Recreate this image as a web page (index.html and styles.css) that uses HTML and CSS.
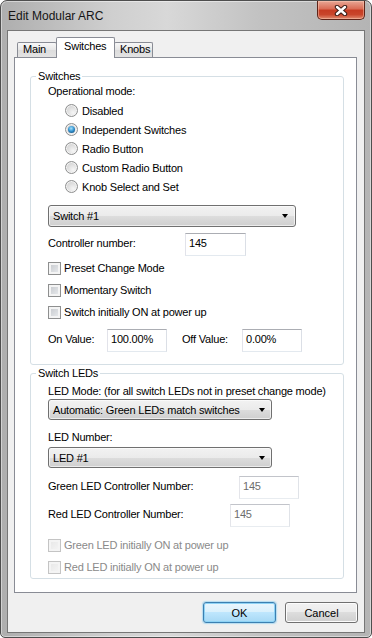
FILE: index.html
```html
<!DOCTYPE html>
<html lang="en">
  <head>
    <meta charset="UTF-8" />
    <title>Edit Modular ARC</title>
    <link rel="stylesheet" href="styles.css">
  </head>
  <body>
    <div class="window">
      <div class="titlebar">
        <span class="title">Edit Modular ARC</span>
        <button class="close-btn">
          <svg width="14" height="11" viewBox="0 0 14 11">
            <path d="M3 2 L11 9 M11 2 L3 9" stroke="#3a1c16" stroke-width="4.4" stroke-linecap="round" fill="none"/>
            <path d="M3 2 L11 9 M11 2 L3 9" stroke="#ffffff" stroke-width="2.4" stroke-linecap="round" fill="none"/>
          </svg>
        </button>
      </div>
      <div class="client">
        <div class="tabs">
          <div class="tab tab-main">Main</div>
          <div class="tab tab-switches active">Switches</div>
          <div class="tab tab-knobs">Knobs</div>
        </div>
        <div class="tab-page">
          <fieldset class="group">
            <legend>Switches</legend>
            <div class="group-body">
              <div class="caption">Operational mode:</div>
              <div class="radio-list">
                <label class="radio-row"><span class="radio"></span>Disabled</label>
                <label class="radio-row"><span class="radio checked"></span>Independent Switches</label>
                <label class="radio-row"><span class="radio"></span>Radio Button</label>
                <label class="radio-row"><span class="radio"></span>Custom Radio Button</label>
                <label class="radio-row"><span class="radio"></span>Knob Select and Set</label>
              </div>
              <div class="combo combo-switch">
                <span>Switch #1</span>
                <span class="arrow"></span>
              </div>
              <div class="field-row controller-row">
                <span class="field-label" style="width: 137px">Controller number:</span>
                <span class="textbox">145</span>
              </div>
              <div class="checks">
                <label class="check-row"><span class="check"></span>Preset Change Mode</label>
                <label class="check-row"><span class="check"></span>Momentary Switch</label>
                <label class="check-row"><span class="check"></span>Switch initially ON at power up</label>
              </div>
              <div class="field-row value-row">
                <span class="field-label" style="width: 59px">On Value:</span>
                <span class="textbox">100.00%</span>
                <span class="field-label off-label" style="width: 60px">Off Value:</span>
                <span class="textbox">0.00%</span>
              </div>
            </div>
          </fieldset>

          <fieldset class="group group-leds">
            <legend>Switch LEDs</legend>
            <div class="group-body">
              <div class="caption led-mode">LED Mode: (for all switch LEDs not in preset change mode)</div>
              <div class="combo combo-led combo-mode">
                <span>Automatic: Green LEDs match switches</span>
                <span class="arrow"></span>
              </div>
              <div class="caption led-number">LED Number:</div>
              <div class="combo combo-led combo-number">
                <span>LED #1</span>
                <span class="arrow"></span>
              </div>
              <div class="field-row green-row">
                <span class="field-label" style="width: 191px">Green LED Controller Number:</span>
                <span class="textbox disabled">145</span>
              </div>
              <div class="field-row red-row">
                <span class="field-label" style="width: 182px">Red LED Controller Number:</span>
                <span class="textbox disabled">145</span>
              </div>
              <div class="checks led-checks">
                <label class="check-row disabled"><span class="check"></span>Green LED initially ON at power up</label>
                <label class="check-row disabled"><span class="check"></span>Red LED initially ON at power up</label>
              </div>
            </div>
          </fieldset>
        </div>
        <div class="buttons">
          <button class="btn btn-default">OK</button>
          <button class="btn">Cancel</button>
        </div>
      </div>
    </div>
  </body>
</html>
```

FILE: styles.css
```css
body {
  margin: 0;
  font-family: "Liberation Sans", Arial, sans-serif;
  font-size: 11px;
  letter-spacing: -0.2px;
  color: #000;
  background-color: #fff;
}
.window {
  width: 372px;
  height: 638px;
  box-sizing: border-box;
  border: 1px solid #4e4e4e;
  border-radius: 7px 7px 5px 5px;
  background: linear-gradient(to right, #aeaeae, #cfcfcf 30%, #d8d8d8 45%, #c2c2c2 70%, #b4b4b4);
  box-shadow: inset 0 0 0 1px rgba(255, 255, 255, 0.45);
  display: flex;
  flex-direction: column;
  overflow: hidden;
}
.titlebar {
  height: 29px;
  flex-shrink: 0;
  display: flex;
  justify-content: space-between;
  align-items: flex-start;
  padding-left: 7px;
}
.title {
  font-size: 12px;
  line-height: 14px;
  letter-spacing: 0;
  margin-top: 8px;
  color: #151515;
}
.close-btn {
  width: 48px;
  height: 19px;
  margin-right: 6px;
  padding: 0;
  border: 1px solid #5e2419;
  border-top: 0;
  border-radius: 0 0 5px 5px;
  background: linear-gradient(#e8a795, #d96a53 45%, #c63b22 50%, #c9452b 75%, #e08a6f);
  box-shadow: inset 0 0 0 1px rgba(255, 210, 190, 0.45);
  display: flex;
  align-items: center;
  justify-content: center;
}
.client {
  margin: 0 6px 4px;
  border: 1px solid #767676;
  background-color: #f0f0f0;
  flex: 1;
  display: flex;
  flex-direction: column;
}
.tabs {
  display: flex;
  align-items: flex-end;
  height: 20px;
  margin: 6px 7px 0 6px;
  padding-left: 3px;
}
.tab {
  box-sizing: border-box;
  height: 15px;
  line-height: 13px;
  padding-left: 5px;
  border: 1px solid #898c95;
  border-bottom: 0;
  border-radius: 2px 2px 0 0;
  background: linear-gradient(#f7f7f7, #e6e6e6 50%, #dcdcdc 50%, #e3e3e3);
}
.tab-main {
  width: 40px;
}
.tab-switches {
  width: 59px;
  margin-left: -1px;
}
.tab-knobs {
  width: 39px;
  margin-left: -1px;
  padding-left: 5px;
}
.tab.active {
  height: 21px;
  margin-bottom: -1px;
  padding-top: 2px;
  padding-left: 7px;
  background: #fff;
  position: relative;
  z-index: 1;
}
.tab-page {
  box-sizing: border-box;
  height: 536px;
  margin: 0 7px 0 6px;
  border: 1px solid #898c95;
  background-color: #fff;
  display: flex;
  flex-direction: column;
}
.group {
  margin: 11px 12px 0 15px;
  padding: 0;
  border: 1px solid #d5dfe5;
  border-radius: 3px;
  min-width: 0;
}
.group legend {
  margin-left: 5px;
  padding: 0 2px;
  line-height: 14px;
}
.group-leds {
  margin-top: 1px;
}
.group-body {
  padding: 0 0 12px 17px;
}
.group-leds .group-body {
  padding-bottom: 0;
}
.caption {
  line-height: 14px;
  margin-top: 1px;
}
.radio-list {
  margin-top: 3px;
}
.radio-row {
  height: 19px;
  display: flex;
  align-items: center;
  padding-left: 17px;
}
.radio {
  box-sizing: border-box;
  width: 13px;
  height: 13px;
  margin-right: 4px;
  border: 1px solid #8e8f8f;
  border-radius: 50%;
  background: radial-gradient(circle at 65% 70%, #f6f6f6, #dcdcdc 55%, #c9c9c9);
  box-shadow: inset 0 0 0 1px #f3f3f3;
  display: flex;
  align-items: center;
  justify-content: center;
}
.radio.checked::after {
  content: "";
  width: 7px;
  height: 7px;
  border-radius: 50%;
  background: radial-gradient(circle at 45% 35%, #a8e2fb, #3a98d4 45%, #14598c 80%);
}
.combo {
  box-sizing: border-box;
  display: flex;
  align-items: center;
  justify-content: space-between;
  padding: 0 7px 0 4px;
  border: 1px solid #707070;
  border-radius: 3px;
  background: linear-gradient(#f2f2f2, #ebebeb 50%, #dddddd 50%, #cfcfcf);
  box-shadow: inset 0 0 0 1px rgba(255, 255, 255, 0.6);
}
.combo-switch {
  width: 248px;
  height: 22px;
  margin-top: 9px;
}
.combo-led {
  width: 224px;
  height: 21px;
  padding-right: 6px;
}
.arrow {
  width: 0;
  height: 0;
  border-left: 3.5px solid transparent;
  border-right: 3.5px solid transparent;
  border-top: 4px solid #000;
}
.field-row {
  display: flex;
  align-items: flex-start;
  height: 23px;
}
.field-label {
  line-height: 13px;
  padding-top: 4px;
  flex-shrink: 0;
}
.off-label {
  margin-left: 15px;
}
.textbox {
  box-sizing: border-box;
  width: 60px;
  height: 23px;
  padding: 3px;
  line-height: 13px;
  border: 1px solid #abadb3;
  border-color: #abadb3 #dbdfe6 #e3e9ef #e2e3ea;
  background-color: #fff;
}
.controller-row .textbox {
  width: 61px;
}
.textbox.disabled {
  color: #6d6d6d;
  border-color: #c2c4ca #e0e3e8 #e8ecf0 #e4e5ea;
}
.controller-row {
  margin-top: 6px;
}
.checks {
  margin-top: 1px;
}
.check-row {
  height: 22px;
  display: flex;
  align-items: center;
}
.check {
  box-sizing: border-box;
  width: 13px;
  height: 13px;
  margin-right: 3px;
  border: 1px solid #8e8f8f;
  background: linear-gradient(135deg, #c3c6cb, #eceef0);
  box-shadow: inset 0 0 0 2px #f4f4f4;
}
.check-row.disabled {
  color: #8a8a8a;
}
.check-row.disabled .check {
  border-color: #c4c4c4;
  background: linear-gradient(135deg, #e6e6e6, #f6f6f6);
}
.value-row {
  margin-top: 6px;
}
.led-mode {
  margin-top: 4px;
}
.combo-mode {
  margin-top: 1px;
}
.led-number {
  margin-top: 10px;
}
.combo-number {
  margin-top: 3px;
}
.green-row {
  margin-top: 8px;
}
.red-row {
  margin-top: 5px;
}
.led-checks {
  margin-top: 7px;
}
.buttons {
  display: flex;
  justify-content: flex-end;
  gap: 9px;
  margin: 9px 6px 0 0;
}
.btn {
  box-sizing: border-box;
  width: 73px;
  height: 21px;
  padding: 0;
  font-family: inherit;
  font-size: 11px;
  color: #000;
  border: 1px solid #707070;
  border-radius: 3px;
  background: linear-gradient(#f2f2f2, #ebebeb 50%, #dddddd 50%, #cfcfcf);
  box-shadow: inset 0 0 0 1px #fcfcfc;
}
.btn-default {
  border-color: #3c7fb1;
  background: linear-gradient(#eaf6fd, #d9f0fc 50%, #bee6fd 50%, #a7d9f5);
  box-shadow: inset 0 0 0 1px #8ed3f5, 0 0 1px 1px rgba(120, 200, 240, 0.5);
}
```
